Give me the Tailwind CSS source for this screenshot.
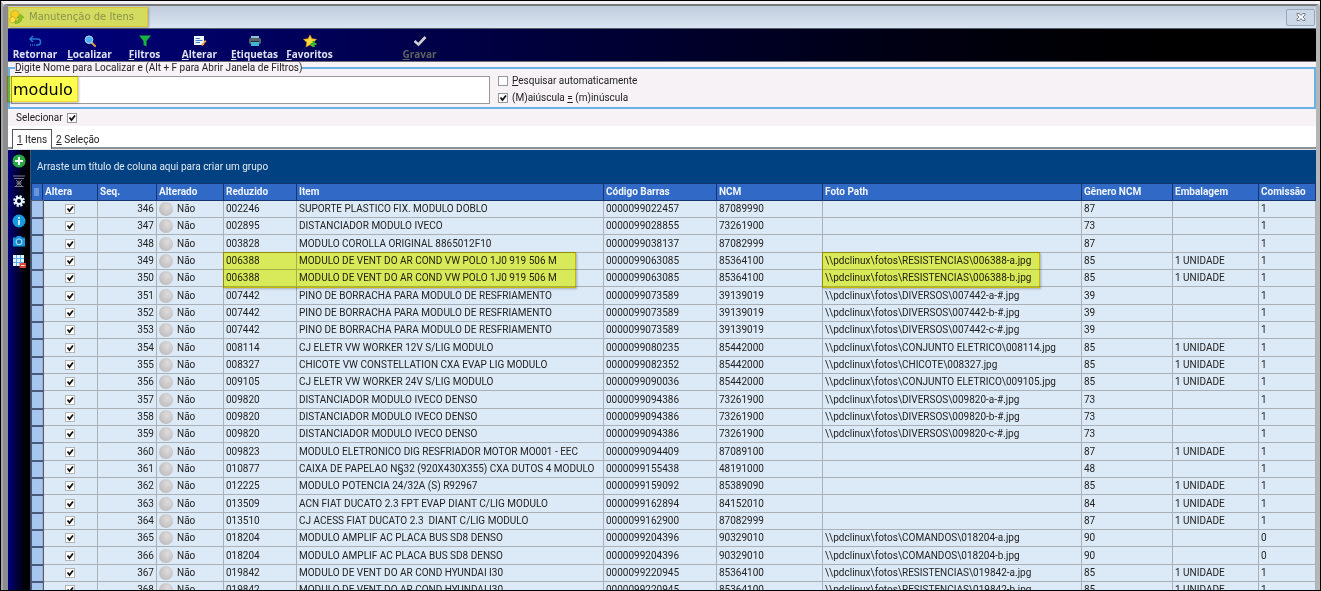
<!DOCTYPE html>
<html lang="pt-BR">
<head>
    <meta charset="UTF-8">
    <meta name="viewport" content="width=device-width, initial-scale=1.0">
    <title>Manutenção de Itens</title>
    <script src="https://cdn.jsdelivr.net/npm/@tailwindcss/browser@4"></script>
</head>
<body class="h-screen overflow-hidden bg-black p-px font-[Roboto,sans-serif] text-[10px] leading-3 text-[#222]">
    <div class="flex h-full flex-col border-t-3 border-l-2 border-t-[#f4f0f4] border-l-[#a8a8a8] bg-[#d3d7db]">
        <div class="flex min-h-0 flex-1 flex-col rounded-t border-t-2 border-r-4 border-l-5 border-t-[#777] border-r-[#b4b6b8] border-l-[#8b8d90] bg-[#d8e2ee]">

            <!-- Barra de título -->
            <header class="flex h-[23px] shrink-0 items-center justify-between border-b border-[#55606c] bg-linear-to-b from-[#c0cddd] to-[#d9e5f2] pr-px">
                <h1 class="flex h-5 w-[140px] items-center gap-1 border border-[#e0c62c] bg-[#d3dc5e] font-['DejaVu_Sans',sans-serif] text-[10px] text-[#8c914e] shadow-[1px_1px_2px_#0004]">
                    <svg class="size-4" viewBox="0 0 16 16"><path d="M2 3.500l4-2.500 4 2.500v4.500l-4 2.500-4-2.500z" fill="#f8cf20" stroke="#c9a212" stroke-width=".7"/><path d="M1 9l3-1.500 3 2.500-1 3-3 1-2-1.500z" fill="#fae04a" stroke="#c9a212" stroke-width=".7"/><path d="M6 12c3.500 0 4-1.500 4-3.500H8L11.500 5 15 8.500h-2c0 4-2.500 6-7 6z" fill="#8cc224" stroke="#6f9c1c" stroke-width=".5"/></svg>
                    Manutenção de Itens
                </h1>
                <button type="button" aria-label="Fechar" class="flex h-[17px] w-[29px] items-center justify-center rounded-xs border border-[#98a8bc] bg-[#ccd8e7]">
                    <svg class="h-2 w-2.5" viewBox="0 0 10 8"><path d="M1 .5h2.400L5 2.400 6.600.5H9V2L7 4l2 2v1.500H6.600L5 5.600 3.400 7.500H1V6l2-2-2-2z" fill="#f4f6f8" stroke="#6d7680" stroke-width=".9"/></svg>
                </button>
            </header>

            <!-- Barra de ferramentas -->
            <nav class="flex h-[33px] shrink-0 border-b border-[#6d6d78] bg-linear-to-r from-[#000080] to-black pt-1.5 font-['Open_Sans',sans-serif] text-[10px] font-bold text-[#dfe2f0]">
                <button type="button" class="flex w-[54px] flex-col items-center">
                    <svg class="h-3 w-4 shrink-0" viewBox="0 0 16 12"><path d="M6 1L3 4l3 3M3 4h8q2.500 0 2.500 3T11 10H9" fill="none" stroke="#2878d0" stroke-width="1.500"/><path d="M3 10h5" stroke="#2878d0" stroke-width="1.500" stroke-dasharray="1 1"/></svg>
                    <span class="leading-3.5">Retornar</span>
                </button>
                <button type="button" class="flex w-[55px] flex-col items-center">
                    <svg class="h-3 w-4 shrink-0" viewBox="0 0 16 12"><path d="M9.500 7.500l3.500 3.500" stroke="#d8a054" stroke-width="2" stroke-linecap="round"/><circle cx="7" cy="4.700" r="3.800" fill="#4eb0f4" stroke="#b4dcfa"/></svg>
                    <span class="leading-3.5"><u>L</u>ocalizar</span>
                </button>
                <button type="button" class="flex w-[55px] flex-col items-center">
                    <svg class="h-3 w-4 shrink-0" viewBox="0 0 16 12"><path d="M2 .5h12L9.500 6v5.500L6.500 10V6z" fill="#16b43c"/></svg>
                    <span class="leading-3.5"><u>F</u>iltros</span>
                </button>
                <button type="button" class="flex w-[55px] flex-col items-center">
                    <svg class="h-3 w-4 shrink-0" viewBox="0 0 16 12"><path d="M2 1h10v9H2z" fill="#f2f7ff"/><path d="M3.500 3.500H8M3.500 5.500h7M3.500 7.500H8" stroke="#3b82d0"/><path d="M9 10l4-5 1.500 1.200L10.500 11z" fill="#f0a040"/></svg>
                    <span class="leading-3.5"><u>A</u>lterar</span>
                </button>
                <button type="button" class="flex w-[55px] flex-col items-center">
                    <svg class="h-3 w-4 shrink-0" viewBox="0 0 16 12"><path d="M4 1h8v3H4z" fill="#8fc3d4"/><rect x="2" y="3" width="12" height="6" rx="1.500" fill="#56666e"/><path d="M4 7h8v4H4z" fill="#42b4d6"/><path d="M4 6.500h8" stroke="#263238"/></svg>
                    <span class="leading-3.5"><u>E</u>tiquetas</span>
                </button>
                <button type="button" class="flex w-[55px] flex-col items-center">
                    <svg class="h-3 w-4 shrink-0" viewBox="0 0 16 12"><path d="M8 0l1.900 3.800 4.600.5-3.300 3L12 12l-4-2.200L4 12l.8-4.700-3.300-3 4.600-.5z" fill="#ffd93a" stroke="#e49b12" stroke-width=".6"/><path d="M11.500 6v6M8.500 9h6" stroke="#38b432" stroke-width="2.200"/></svg>
                    <span class="leading-3.5"><u>F</u>avoritos</span>
                </button>
                <button type="button" disabled class="ml-[55px] flex w-[55px] flex-col items-center text-[#62625e]">
                    <svg class="h-3 w-4 shrink-0" viewBox="0 0 16 12"><path d="M2.500 6L6.500 9.500 13.500 2" fill="none" stroke="#d0d0d4" stroke-width="2.600"/></svg>
                    <span class="leading-3.5"><u>G</u>ravar</span>
                </button>
            </nav>

            <!-- Pesquisa -->
            <section class="shrink-0 bg-[#f6f2f6]">
                <fieldset class="h-[47px] border-2 border-[#68b2e6] px-px">
                    <legend class="ml-1 h-3"><label for="busca"><u>D</u>igite Nome para Localizar e (Alt + F para Abrir Janela de Filtros)</label></legend>
                    <div class="flex items-center gap-2 pt-px">
                        <div class="relative w-[479px]">
                            <input id="busca" type="text" value="modulo" class="block h-7 w-full border border-[#9a9a9e] bg-white px-px font-['DejaVu_Sans',sans-serif] text-base text-black outline-none">
                            <span class="pointer-events-none absolute top-0 -left-1 h-6.5 w-[71px] border border-[#f0d630] bg-[#ffff50] mix-blend-multiply shadow-[1px_1px_2px_#0004]"></span>
                        </div>
                        <div class="flex flex-col gap-[5px]">
                            <label class="flex h-3 items-center gap-1"><input type="checkbox" class="size-2.5 appearance-none border border-[#989898] bg-white"><span><u>P</u>esquisar automaticamente</span></label>
                            <label class="flex h-3 items-center gap-1"><span class="relative flex"><input type="checkbox" checked class="peer size-2.5 appearance-none border border-[#989898] bg-white"><svg class="pointer-events-none absolute inset-0 hidden size-2.5 peer-checked:block" viewBox="0 0 10 10"><path d="M2.500 4.500l2 2.500 3.500-4.500" fill="none" stroke="#111" stroke-width="1.800"/></svg></span><span>(M)aiúscula <u>=</u> (m)inúscula</span></label>
                        </div>
                    </div>
                </fieldset>
                <label class="flex h-[17px] items-center gap-1 pl-2">Selecionar <span class="relative flex"><input type="checkbox" checked class="peer size-2.5 appearance-none border border-[#989898] bg-white"><svg class="pointer-events-none absolute inset-0 hidden size-2.5 peer-checked:block" viewBox="0 0 10 10"><path d="M2.500 4.500l2 2.500 3.500-4.500" fill="none" stroke="#111" stroke-width="1.800"/></svg></span></label>
            </section>

            <!-- Abas -->
            <div role="tablist" class="flex h-[23px] shrink-0 items-end border-b-2 border-[#909090] bg-white pl-1">
                <button type="button" role="tab" aria-selected="true" class="-mb-0.5 h-5 border border-b-0 border-[#555] bg-white px-1"><u>1</u> Itens</button>
                <button type="button" role="tab" aria-selected="false" class="h-3.5 px-1"><u>2</u> Seleção</button>
            </div>

            <div class="flex min-h-0 flex-1 pt-px">
                <!-- Atalhos laterais -->
                <aside class="flex w-[22px] shrink-0 flex-col items-center gap-1.5 bg-linear-to-r from-[#000080] to-black pt-1">
                    <button type="button" aria-label="Adicionar"><svg class="size-3.5" viewBox="0 0 14 14"><circle cx="7" cy="7" r="6.600" fill="#26a944"/><path d="M7 3v8M3 7h8" stroke="#fff" stroke-width="2"/></svg></button>
                    <button type="button" aria-label="Ocultar"><svg class="size-3.5" viewBox="0 0 14 14" fill="none" stroke="#777a80"><path d="M1 2h12M2 4.500h10M4 6l7 7M10 6l-7 7M2.500 12.500h9"/><circle cx="7" cy="9" r="2"/></svg></button>
                    <button type="button" aria-label="Configurar"><svg class="size-3.5" viewBox="0 0 14 14"><circle cx="7" cy="7" r="4.600" fill="none" stroke="#d8f0ff" stroke-width="2.600" stroke-dasharray="2.200 1.400"/><circle cx="7" cy="7" r="3" fill="none" stroke="#eaf7ff" stroke-width="2"/></svg></button>
                    <button type="button" aria-label="Informações"><svg class="size-3.5" viewBox="0 0 14 14"><circle cx="7" cy="7" r="6.500" fill="#169be0"/><path d="M7 6v5M7 3v1.700" stroke="#fff" stroke-width="1.600"/></svg></button>
                    <button type="button" aria-label="Foto"><svg class="size-3.5" viewBox="0 0 14 14"><path d="M1 3.500h3L5 2h4l1 1.500h3v9H1z" fill="#1696dc"/><circle cx="7" cy="7.800" r="2.800" fill="#1a70b4" stroke="#9cdcff" stroke-width="1.200"/></svg></button>
                    <button type="button" aria-label="Grade"><svg class="size-3.5" viewBox="0 0 14 14"><path d="M1 1h11v11H1z" fill="#e4f4ff"/><path d="M1 4.500h11M1 8.500h11M4.500 1v11M8.500 1v11" stroke="#58aee8"/><rect x="7.500" y="9" width="6.500" height="5" fill="#e5432e"/><path d="M9 11.500h3.500" stroke="#fff"/></svg></button>
                </aside>

                <main class="min-w-0 flex-1 overflow-hidden border-l border-[#405070] bg-[#dce9f6]">
                    <p class="flex h-[33px] items-center bg-[#004182] pl-1.5 text-[#e4eaf2]">Arraste um título de coluna aqui para criar um grupo</p>
                    <table class="w-full table-fixed border-collapse whitespace-nowrap">
                        <colgroup>
                            <col class="w-[11px]"><col class="w-[55px]"><col class="w-[59px]"><col class="w-[67px]"><col class="w-[73px]"><col class="w-[307px]"><col class="w-[113px]"><col class="w-[106px]"><col><col class="w-[91px]"><col class="w-[86px]"><col class="w-[57px]">
                        </colgroup>
                        <thead>
                            <tr class="h-[17px] bg-[#3069c6] text-left text-[#f0f4fc] *:border *:border-[#15356c] *:p-0 *:pl-0.5">
                                <th aria-label="Indicador"><svg class="h-2 w-1.5" viewBox="0 0 6 8"><path d="M0 1h5M0 3h5M0 5h5M0 7h5" stroke="#a4c2f0"/></svg></th>
                                <th>Altera</th><th>Seq.</th><th>Alterado</th><th>Reduzido</th><th>Item</th><th>Código Barras</th><th>NCM</th><th>Foto Path</th><th>Gênero NCM</th><th>Embalagem</th><th>Comissão</th>
                            </tr>
                        </thead>
                        <tbody id="linhas"></tbody>
                    </table>
                </main>
            </div>
        </div>
    </div>

    <script>
        // seq, reduzido, item, código de barras, ncm, foto, embalagem, comissão
        const itens = [
            [346, "002246", "SUPORTE PLASTICO FIX. MODULO DOBLO", "0000099022457", "87089990", "", "", 1],
            [347, "002895", "DISTANCIADOR MODULO IVECO", "0000099028855", "73261900", "", "", 1],
            [348, "003828", "MODULO COROLLA ORIGINAL 8865012F10", "0000099038137", "87082999", "", "", 1],
            [349, "006388", "MODULO DE VENT DO AR COND VW POLO 1J0 919 506 M", "0000099063085", "85364100", "RESISTENCIAS\\006388-a.jpg", "1 UNIDADE", 1],
            [350, "006388", "MODULO DE VENT DO AR COND VW POLO 1J0 919 506 M", "0000099063085", "85364100", "RESISTENCIAS\\006388-b.jpg", "1 UNIDADE", 1],
            [351, "007442", "PINO DE BORRACHA PARA MODULO DE RESFRIAMENTO", "0000099073589", "39139019", "DIVERSOS\\007442-a-#.jpg", "", 1],
            [352, "007442", "PINO DE BORRACHA PARA MODULO DE RESFRIAMENTO", "0000099073589", "39139019", "DIVERSOS\\007442-b-#.jpg", "", 1],
            [353, "007442", "PINO DE BORRACHA PARA MODULO DE RESFRIAMENTO", "0000099073589", "39139019", "DIVERSOS\\007442-c-#.jpg", "", 1],
            [354, "008114", "CJ ELETR VW WORKER 12V S/LIG MODULO", "0000099080235", "85442000", "CONJUNTO ELETRICO\\008114.jpg", "1 UNIDADE", 1],
            [355, "008327", "CHICOTE VW CONSTELLATION CXA EVAP LIG MODULO", "0000099082352", "85442000", "CHICOTE\\008327.jpg", "1 UNIDADE", 1],
            [356, "009105", "CJ ELETR VW WORKER 24V S/LIG MODULO", "0000099090036", "85442000", "CONJUNTO ELETRICO\\009105.jpg", "1 UNIDADE", 1],
            [357, "009820", "DISTANCIADOR MODULO IVECO DENSO", "0000099094386", "73261900", "DIVERSOS\\009820-a-#.jpg", "", 1],
            [358, "009820", "DISTANCIADOR MODULO IVECO DENSO", "0000099094386", "73261900", "DIVERSOS\\009820-b-#.jpg", "", 1],
            [359, "009820", "DISTANCIADOR MODULO IVECO DENSO", "0000099094386", "73261900", "DIVERSOS\\009820-c-#.jpg", "", 1],
            [360, "009823", "MODULO ELETRONICO DIG RESFRIADOR MOTOR MO001 - EEC", "0000099094409", "87089100", "", "1 UNIDADE", 1],
            [361, "010877", "CAIXA DE PAPELAO N§32 (920X430X355) CXA DUTOS 4 MODULO", "0000099155438", "48191000", "", "", 1],
            [362, "012225", "MODULO POTENCIA 24/32A (S) R92967", "0000099159092", "85389090", "", "1 UNIDADE", 1],
            [363, "013509", "ACN FIAT DUCATO 2.3 FPT EVAP DIANT C/LIG MODULO", "0000099162894", "84152010", "", "1 UNIDADE", 1],
            [364, "013510", "CJ ACESS FIAT DUCATO 2.3  DIANT C/LIG MODULO", "0000099162900", "87082999", "", "1 UNIDADE", 1],
            [365, "018204", "MODULO AMPLIF AC PLACA BUS SD8 DENSO", "0000099204396", "90329010", "COMANDOS\\018204-a.jpg", "", 0],
            [366, "018204", "MODULO AMPLIF AC PLACA BUS SD8 DENSO", "0000099204396", "90329010", "COMANDOS\\018204-b.jpg", "", 0],
            [367, "019842", "MODULO DE VENT DO AR COND HYUNDAI I30", "0000099220945", "85364100", "RESISTENCIAS\\019842-a.jpg", "1 UNIDADE", 1],
            [368, "019842", "MODULO DE VENT DO AR COND HYUNDAI I30", "0000099220945", "85364100", "RESISTENCIAS\\019842-b.jpg", "1 UNIDADE", 1]
        ];

        document.getElementById("linhas").innerHTML = itens.map(([seq, reduzido, item, barras, ncm, foto, embalagem, comissao]) => {
            // marca-texto sobre as linhas 349 e 350
            const marcaItem = seq === 349 ? `<span class="pointer-events-none absolute -top-px -left-px z-10 h-9 w-[353px] border border-[#e6c800] bg-[#fbff5d] mix-blend-multiply shadow-[1px_1px_2px_#0004]"></span>` : "";
            const marcaFoto = seq === 349 ? `<span class="pointer-events-none absolute -top-px -left-px z-10 h-9 w-[218px] border border-[#e6c800] bg-[#fbff5d] mix-blend-multiply shadow-[1px_1px_2px_#0004]"></span>` : "";
            return `
            <tr class="h-[17px] nth-[3n]:h-[18px] *:border *:border-[#a9b0b8] *:p-0 *:px-0.5">
                <td class="bg-[#a5c6ee] outline outline-[#4a5a78]"></td>
                <td><span class="relative mx-auto block size-2.5"><input type="checkbox" checked aria-label="Altera ${seq}" class="peer block size-2.5 appearance-none border border-[#b4b4b4] bg-white"><svg class="pointer-events-none absolute inset-0 hidden size-2.5 peer-checked:block" viewBox="0 0 10 10"><path d="M2.500 4.500l2 2.500 3.500-4.500" fill="none" stroke="#111" stroke-width="1.800"/></svg></span></td>
                <td class="text-right">${seq}</td>
                <td><span class="flex items-center gap-1"><i class="size-3.5 rounded-full bg-radial-[at_60%_35%] from-[#dedcdc] to-[#b4b2b4]"></i>Não</span></td>
                <td class="relative">${reduzido}${marcaItem}</td>
                <td class="whitespace-pre">${item}</td>
                <td>${barras}</td>
                <td>${ncm}</td>
                <td class="relative">${foto ? "\\\\pdclinux\\fotos\\" + foto : ""}${marcaFoto}</td>
                <td>${ncm.slice(0, 2)}</td>
                <td>${embalagem}</td>
                <td>${comissao}</td>
            </tr>`;
        }).join("");
    </script>
</body>
</html>
